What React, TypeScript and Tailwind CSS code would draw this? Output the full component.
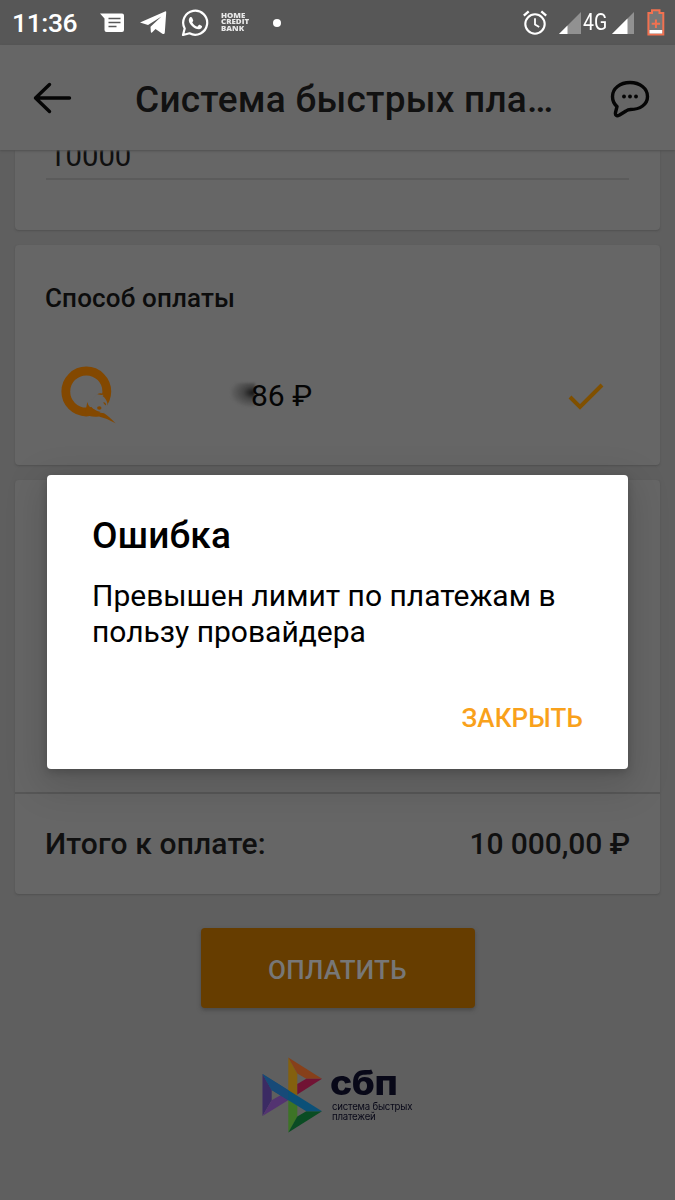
import React from "react";

function StatusBar() {
  return (
    <div className="flex h-[45px] shrink-0 items-center bg-[#575757] pl-[12px] pr-[10px] text-white">
      <span className="w-[88px] pt-px text-[26.500px] font-medium leading-[42px] tracking-[-0.400px]">11:36</span>
      <svg className="h-[20px] w-[25px]" viewBox="0 0 25 20" fill="none">
        <path d="M0 0.5H22Q24 0.5 24 2.5V17Q24 19 22 19H6.500Q4.500 19 4.500 17V5.500Z" fill="#fff" />
        <path d="M8.500 5.500H20.500M8.500 9.500H20.500M8.500 13.500H16.500" stroke="#575757" strokeWidth="1.700" />
      </svg>
      <svg className="ml-[15px] h-[24px] w-[27px]" viewBox="0 0 27 24" fill="#fff">
        <path d="M0 11.500 25 .4Q26.500 0 26.200 1.800L24.800 21.500Q24.500 24 22 22.500L15.500 18 12 21.500Q11 22.400 10.800 20.500L10.500 15.800 21.500 5.500 8 14Z" />
      </svg>
      <svg className="ml-[14px] h-[28px] w-[28px]" viewBox="0 0 28 28" fill="none">
        <path d="M2 26 3.700 19.500A12 12 0 1 1 8.600 24.300Z" stroke="#fff" strokeWidth="2.200" strokeLinejoin="round" />
        <path d="M8.300 9.200C9 7.600 10.500 7.600 11 8.600L12.200 11.200C12.500 12 11.300 12.900 11.200 13.300C12.300 15.500 14 16.800 16.300 17.700L17.800 16C18.200 15.500 18.800 15.700 20.900 16.900C21.500 17.300 20.700 19.500 19 20C16.700 20.800 13.500 19.300 11.200 17.200C8.500 14.600 7 11.500 8.300 9.200Z" fill="#fff" />
      </svg>
      <div className="ml-[12px] flex w-[36px] origin-left scale-x-[1.130] scale-y-[1.100] flex-col font-['Open_Sans',sans-serif] text-[7px] font-extrabold leading-[6.200px] text-[#e8e8e8]">
        <span>HOME</span>
        <span>CREDIT</span>
        <span>BANK</span>
      </div>
      <span className="ml-[16px] h-[8px] w-[8px] rounded-full bg-white" />
      <svg className="ml-auto h-[25px] w-[24px]" viewBox="0 0 24 25" fill="none" stroke="#fff">
        <circle cx="12" cy="14" r="9.700" strokeWidth="2.100" />
        <path d="M.8 5.700 5.700 1.400M18.300 1.400 23.200 5.700" strokeWidth="2.300" />
        <path d="M12 8.200V14.400L16.200 17" strokeWidth="1.800" />
      </svg>
      <svg className="ml-[12px] h-[22px] w-[22px]" viewBox="0 0 22 22">
        <path d="M0 22 22 0V22Z" fill="#919191" />
        <path d="M0 22 8.500 13.500V22Z" fill="#fff" />
      </svg>
      <span className="ml-[2px] w-[25px] origin-left scale-x-[0.830] whitespace-nowrap text-[23.500px] leading-none">4G</span>
      <svg className="ml-[4px] h-[22px] w-[22px]" viewBox="0 0 22 22">
        <path d="M0 22 22 0V22Z" fill="#919191" />
        <path d="M0 22 15.500 6.500V22Z" fill="#fff" />
      </svg>
      <svg className="ml-[13px] h-[27px] w-[18px]" viewBox="0 0 18 27" fill="none">
        <path d="M1.400 4H5V1.300H12.500V4H16.300V25.500H1.400Z" fill="#777" stroke="#f17150" strokeWidth="2" />
        <path d="M2.500 21H15.200V24.500H2.500Z" fill="#fff" />
        <path d="M8.900 10.500V19M4.700 14.700H13.100" stroke="#f17150" strokeWidth="2" />
      </svg>
    </div>
  );
}

function Header() {
  return (
    <header className="relative z-10 flex h-[105px] shrink-0 items-center bg-[#666] pl-[33px] pr-[25px] shadow-[0_1px_2px_#505050]">
      <svg className="mt-px h-[32px] w-[39px]" viewBox="0 0 39 32" fill="none" stroke="#050505" strokeWidth="3.400" strokeLinecap="round" strokeLinejoin="round">
        <path d="M36.500 16H2.500M16.500 2.500 2.500 16 16.500 29.500" />
      </svg>
      <h1 className="ml-[63px] mt-[5px] w-[440px] whitespace-nowrap text-[37px] font-medium leading-[44px] tracking-[0.250px] text-[#111]">Система быстрых пла…</h1>
      <svg className="ml-auto mt-[2px] h-[38px] w-[40px]" viewBox="0 0 40 38" fill="none">
        <path d="M20 2.500C30 2.500 37.500 8.500 37.500 16.500C37.500 24.500 30 29.500 20.500 29.500Q18 29.500 16 31L9.500 35C6.500 36.500 5 35.500 5.500 32.500L7 26.500C4 24 2.500 20.500 2.500 16.500C2.500 8.500 10 2.500 20 2.500Z" stroke="#050505" strokeWidth="3.400" strokeLinejoin="round" />
        <g fill="#050505"><circle cx="14" cy="16.500" r="1.900" /><circle cx="20" cy="16.500" r="1.900" /><circle cx="26" cy="16.500" r="1.900" /></g>
      </svg>
    </header>
  );
}

function QiwiLogo() {
  return (
    <svg className="h-[58px] w-[56px]" viewBox="0 0 56 58">
      <circle cx="25.300" cy="25.500" r="20.500" fill="none" stroke="#834800" strokeWidth="8.800" />
      <path d="M36 28.500Q38.500 26.500 42 28.300Q43 29.500 41.500 30Q45 32 46.500 37.500L44.500 47L40 46Q33 44.500 30.500 41Q27.500 38.500 26.700 36Q31 34 36 28.500Z" fill="#666" />
      <path d="M26.300 36Q27.500 41.500 33 43.300Q36 46.500 43 47.200Q47 49.500 54.500 57.200Q46 52.300 38 50.500Q29 51.500 24 48Z" fill="#834800" />
      <path d="M36.300 28.300Q39.500 26.300 43 28.500L40.500 29Z" fill="#834800" />
      <ellipse cx="38.300" cy="42" rx="2.200" ry="1.700" fill="#834800" />
      <path d="M42.300 36Q45.500 36.500 45 39.500Q42.500 38.500 42.300 36Z" fill="#834800" />
    </svg>
  );
}

function SbpLogo() {
  return (
    <div className="mt-[49px] flex h-[76px] w-[151px]">
      <svg className="h-[76px] w-[61px] shrink-0" viewBox="0 0 61 76">
        <path d="M.5 17 9.700 33V43.300L.5 59Z" fill="#3b2b63" />
        <path d="M.5 59 9.700 43.300 18.500 38.300 26.500 43Z" fill="#533371" />
        <path d="M26.300 .5 35.300 16.500V40L26.300 34Z" fill="#84600e" />
        <path d="M26.300 .5 60 21.700H44.300L35.300 16.500Z" fill="#87401a" />
        <path d="M60 21.700 35.300 37.500V27L44.300 21.700Z" fill="#711334" />
        <path d="M26.300 42 35.300 48V60L26.300 75.500Z" fill="#3d7426" />
        <path d="M26.300 75.500 35.300 59.500 44.300 54.300H60Z" fill="#0a4c23" />
        <path d="M.5 17 60 54.300H44.300L9.700 33Z" fill="#0b5078" />
        <path d="M.5 17 26.300 33.200V43.200L9.700 33Z" fill="#174a78" />
      </svg>
      <div className="ml-[7px] pt-[9px] font-['Inter',sans-serif] text-[#080818]">
        <div className="h-[34px] origin-left scale-x-[1.100] text-[34px] font-extrabold leading-[34px] tracking-[-0.400px]">сбп</div>
        <div className="ml-[2px] mt-px origin-left scale-x-[0.960] whitespace-nowrap text-[10px] leading-[10px] tracking-[-0.200px]">система быстрых<br />платежей</div>
      </div>
    </div>
  );
}

function ErrorDialog() {
  return (
    <div role="dialog" aria-modal="true" className="absolute left-[47px] top-[475px] z-20 flex h-[294px] w-[581px] flex-col rounded-[4px] bg-white px-[45px] pt-[38px] text-black shadow-[0_12px_36px_8px_rgba(0,0,0,0.13),0_3px_8px_rgba(0,0,0,0.18)]">
      <h2 className="text-[37px] font-medium leading-[46px] tracking-[0.200px]">Ошибка</h2>
      <p className="mt-[19px] whitespace-nowrap text-[30px] leading-[36px]">Превышен лимит по платежам в<br />пользу провайдера</p>
      <button className="mt-[53px] self-end whitespace-nowrap text-[26px] font-medium leading-[30px] tracking-[0.100px] text-[#f9a11b]">ЗАКРЫТЬ</button>
    </div>
  );
}

export default function App() {
  return (
    <div className="relative flex h-[1200px] w-[675px] flex-col overflow-hidden bg-[#5f5f5f] font-['Roboto',sans-serif]">
      <StatusBar />
      <Header />
      <main className="flex flex-1 flex-col items-center">
        <section className="h-[80px] w-[645px] overflow-hidden rounded-b-[4px] bg-[#666] px-[31px] shadow-[0_1px_2px_#505050]">
          <div className="flex h-[30px] items-end border-b-2 border-[#5b5b5b]">
            <span className="mb-[4px] ml-[3px] text-[29.300px] leading-[36px] text-[#101010]">10000</span>
          </div>
        </section>
        <section className="mt-[15px] h-[220px] w-[645px] rounded-[4px] bg-[#666] pl-[30px] pr-[55px] pt-[38px] shadow-[0_1px_2px_#505050]">
          <h2 className="text-[26px] font-medium leading-[30px] tracking-[0.150px] text-[#0c0c0c]">Способ оплаты</h2>
          <div className="mt-[53px] flex h-[58px] items-center pl-[16px]">
            <QiwiLogo />
            <div className="relative ml-[134px] mt-[2px] text-[30px] leading-[36px] text-[#050505]">
              <span className="absolute left-[-20px] top-[5px] h-[24px] w-[24px] bg-[radial-gradient(ellipse_at_90%_40%,#151515_0%,#444_30%,transparent_75%)] blur-[1px]" />
              <span className="relative">86 ₽</span>
            </div>
            <svg className="ml-auto mr-[1px] mt-[4px] h-[28px] w-[36px]" viewBox="0 0 36 28" fill="none">
              <path d="M2 14 12 24 34 2" stroke="#805000" strokeWidth="4" />
            </svg>
          </div>
        </section>
        <section className="mt-[15px] flex h-[414px] w-[645px] flex-col rounded-[4px] bg-[#666] shadow-[0_1px_2px_#505050]">
          <div className="h-[314px] border-b-2 border-[#575757]" />
          <div className="flex h-[100px] items-center justify-between px-[30px] pb-[2px] text-[30px] font-medium text-[#101010]">
            <span className="tracking-[0.150px]">Итого к оплате:</span>
            <span className="tracking-[-0.100px]">10 000,00 ₽</span>
          </div>
        </section>
        <button className="mt-[34px] h-[80px] w-[274px] shrink-0 rounded-[4px] bg-[#663d00] pt-[4px] text-[26px] font-medium tracking-[0.250px] text-[#777] shadow-[0_2px_4px_#484848]">ОПЛАТИТЬ</button>
        <SbpLogo />
      </main>
      <ErrorDialog />
    </div>
  );
}
